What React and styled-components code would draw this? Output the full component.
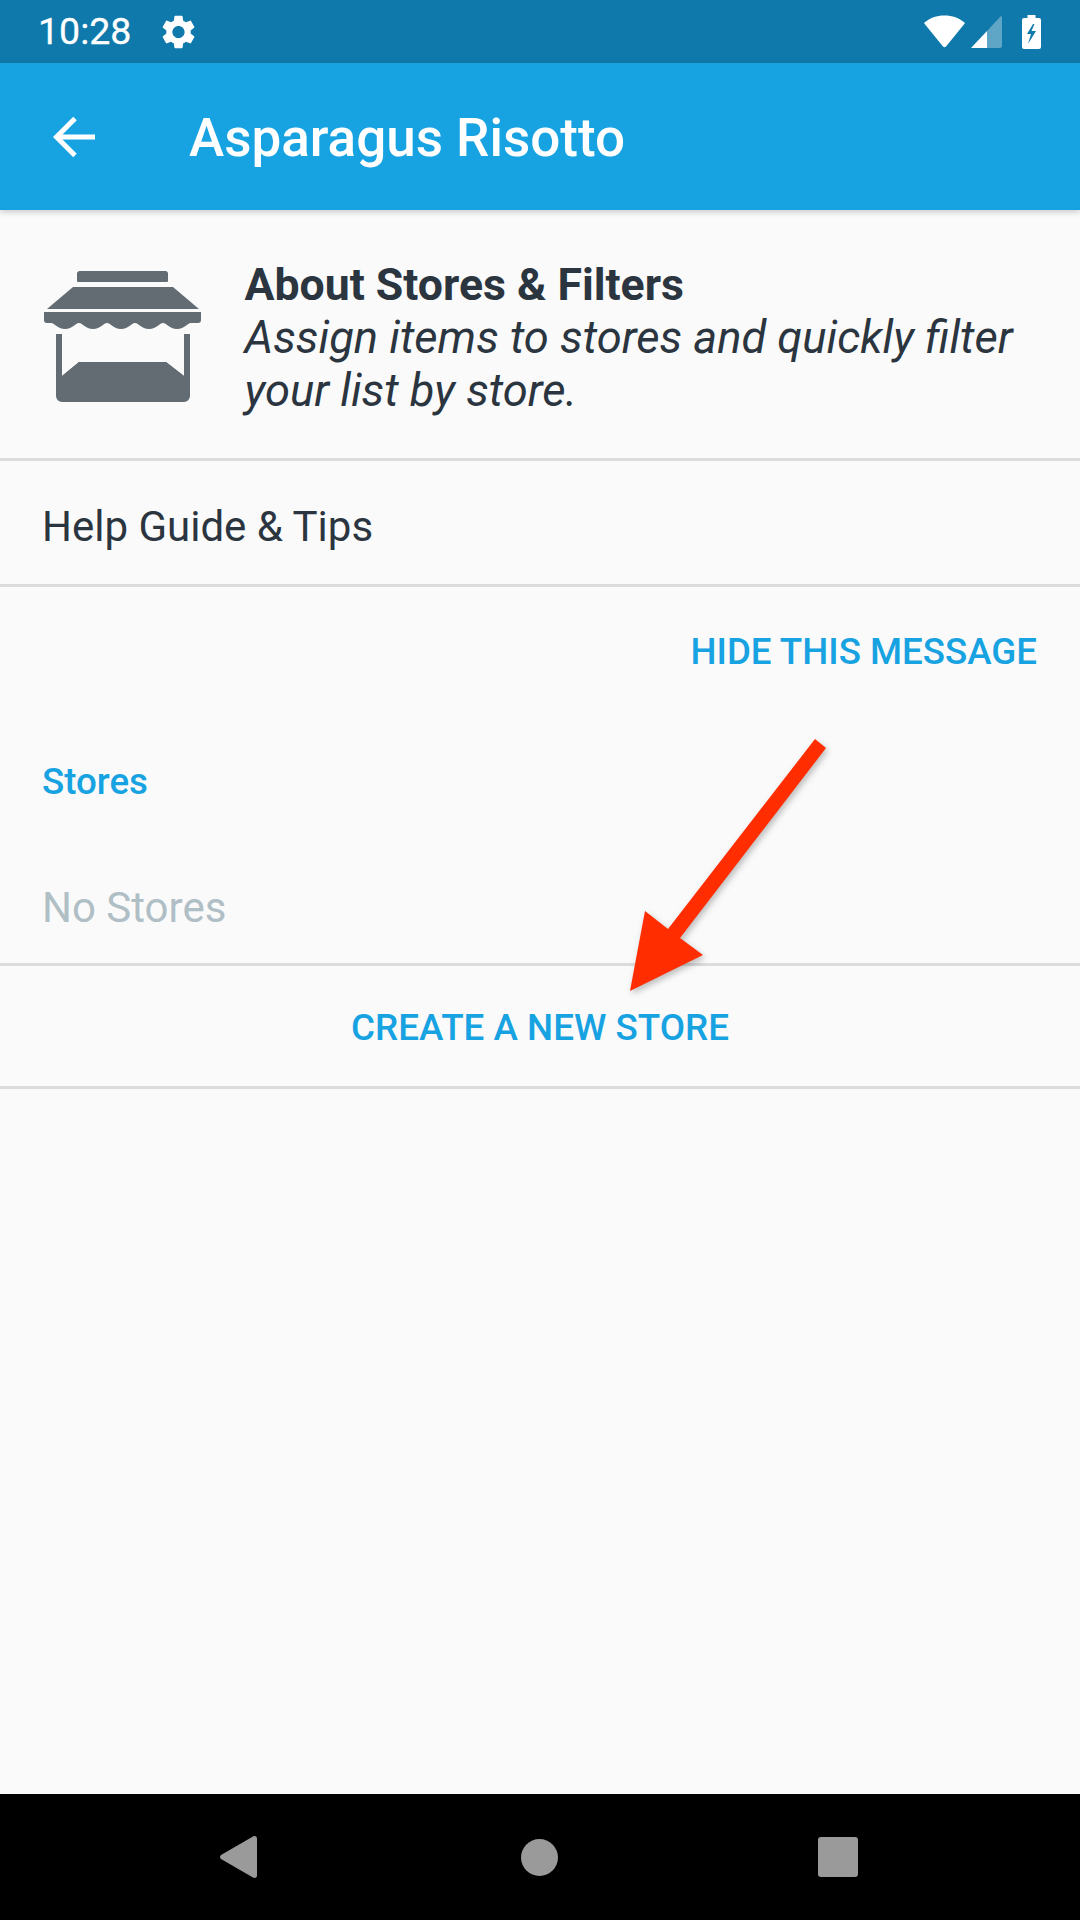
import React from "react";
import styled, { createGlobalStyle } from "styled-components";

const Global = createGlobalStyle`
  html, body { margin: 0; padding: 0; background: #fafafa; }
  * { box-sizing: border-box; }
`;
const Screen = styled.div`
  position: relative; width: 1080px; height: 1920px; display: flex; flex-direction: column;
  background: #fafafa; font-family: Roboto, sans-serif; overflow: hidden;
`;
const StatusBar = styled.div`
  height: 63px; flex: none; background: #1079ab; color: #fff; display: flex; align-items: center;
  padding: 0 39px 0 38px;
`;
const Time = styled.span`font-size: 37.5px; line-height: 65px; margin-right: 31px; -webkit-text-stroke: 0.3px #fff;`;
const Spacer = styled.div`flex: 1;`;
const StatusIcon = styled.svg`display: block; flex: none; margin-left: ${p => p.$gap || 0}px; fill: #fff;`;
const AppBar = styled.header`
  height: 147px; flex: none; background: #17a2e2; color: #fff; display: flex; align-items: center;
  padding-left: 53px; box-shadow: 0 2px 6px rgba(0,0,0,.2); position: relative; z-index: 1;
`;
const BackIcon = styled.svg`display: block; flex: none; margin-right: 94px;`;
const Title = styled.h1`margin: 2px 0 0; font-size: 53px; font-weight: 500; line-height: 60px;`;
const Main = styled.main`flex: 1; display: flex; flex-direction: column;`;
const About = styled.section`
  height: 251px; display: flex; align-items: flex-start; padding: 49px 0 0 44px;
  border-bottom: 3px solid #dcdcdc;
`;
const StoreIcon = styled.svg`display: block; flex: none; margin: 11px 44px 0 0;`;
const AboutCopy = styled.div`margin-left: -0.5px;`;
const AboutTitle = styled.div`font-size: 44.6px; font-weight: 700; line-height: 53px; color: #2b3540;`;
const AboutText = styled.div`font-size: 45.3px; font-style: italic; line-height: 52.5px; color: #2b3540;`;
const Row = styled.div`
  height: 126px; display: flex; align-items: center; padding: ${p => p.$center ? 2 : 7}px 42px 0;
  justify-content: ${p => p.$center ? "center" : "flex-start"};
  border-bottom: ${p => p.$divider ? "3px solid #dcdcdc" : "none"};
  font-size: 42px; color: #2b3540;
`;
const HideLink = styled.div`
  text-align: right; padding: 43px 43px 0; font-size: 36.7px; line-height: 44px; font-weight: 500; color: #17a2e2;
`;
const SectionLabel = styled.div`
  padding: 89px 42px 0; font-size: 36.7px; line-height: 38px; font-weight: 500; color: #17a2e2;
`;
const Empty = styled.div`
  height: 143px; padding: 0 42px 31px; display: flex; align-items: flex-end; margin-top: 22px;
  font-size: 42px; color: #b0bec5; border-bottom: 3px solid #dcdcdc;
`;
const CreateLink = styled(Row)`font-size: 36.8px; font-weight: 500; color: #17a2e2; height: 123px;`;
const NavBar = styled.nav`
  height: 126px; flex: none; background: #000; display: flex; align-items: center;
  padding: 0 222px 0 220px; justify-content: space-between;
`;
const NavIcon = styled.svg`display: block; fill: #9a9a9a; margin-left: ${p => p.$shift || 0}px;`;
const ArrowLayer = styled.svg`
  position: absolute; left: 620px; top: 730px; z-index: 2; overflow: visible;
  filter: drop-shadow(2px 3px 3px rgba(0,0,0,.25));
`;

export default function App() {
  return (
    <Screen>
      <Global />
      <StatusBar>
        <Time>10:28</Time>
        <StatusIcon width="33" height="34" viewBox="2.6 2 18.8 20">
          <path d="M19.14 12.94c.04-.3.06-.61.06-.94 0-.32-.02-.64-.07-.94l2.03-1.58c.18-.14.23-.41.12-.61l-1.92-3.32c-.12-.22-.37-.29-.59-.22l-2.39.96c-.5-.38-1.03-.7-1.62-.94l-.36-2.54c-.04-.24-.24-.41-.48-.41h-3.84c-.24 0-.43.17-.47.41l-.36 2.54c-.59.24-1.13.57-1.62.94l-2.39-.96c-.22-.08-.47 0-.59.22L2.74 8.87c-.12.21-.08.47.12.61l2.03 1.58c-.05.3-.09.63-.09.94s.02.64.07.94l-2.03 1.58c-.18.14-.23.41-.12.61l1.92 3.32c.12.22.37.29.59.22l2.39-.96c.5.38 1.03.7 1.62.94l.36 2.54c.05.24.24.41.48.41h3.84c.24 0 .44-.17.47-.41l.36-2.54c.59-.24 1.13-.56 1.62-.94l2.39.96c.22.08.47 0 .59-.22l1.92-3.32c.12-.22.07-.47-.12-.61l-2.01-1.58zM12 15.6c-1.98 0-3.6-1.62-3.6-3.6s1.62-3.6 3.6-3.6 3.6 1.62 3.6 3.6-1.62 3.6-3.6 3.6z" />
        </StatusIcon>
        <Spacer />
        <StatusIcon width="41" height="33" viewBox="0 0 41 33">
          <path d="M0.5 7.5C6 3 12.5 0.5 20.5 0.5S35 3 40.5 7.5c.4.4.4.9 0 1.3L22 31.5c-.8 1-2.2 1-3 0L.5 8.8c-.4-.4-.4-.9 0-1.3z" />
        </StatusIcon>
        <StatusIcon $gap={6} width="31" height="32" viewBox="0 0 31 32">
          <path d="M0 32 L16 15 V32 Z" />
          <path d="M16 15 L29.5 0.6 C30.2 0 31 .4 31 1.2 V30 a2 2 0 0 1-2 2 H16 Z" fillOpacity=".33" />
        </StatusIcon>
        <StatusIcon $gap={20} width="19" height="34" viewBox="0 0 19 34">
          <path fillRule="evenodd" d="M5.5 0h8v3H17a2 2 0 0 1 2 2v27a2 2 0 0 1-2 2H2a2 2 0 0 1-2-2V5a2 2 0 0 1 2-2h3.5zM11 9 5 19h4l-3 10 8-13h-4.5l3-7z" />
        </StatusIcon>
      </StatusBar>
      <AppBar>
        <BackIcon width="42" height="42" viewBox="0 0 42 42" fill="none" stroke="#fff" strokeWidth="5">
          <path d="M42 21H4M22 2.5 3.5 21 22 39.5" />
        </BackIcon>
        <Title>Asparagus Risotto</Title>
      </AppBar>
      <Main>
        <About>
          <StoreIcon width="157" height="132" viewBox="0 0 157 132" fill="#626c72">
            <path d="M36 1h86a3 3 0 0 1 2 2v8a1 1 0 0 1-1 1H34a1 1 0 0 1-1-1V3a3 3 0 0 1 3-2z" />
            <path d="M29 17h100l26 22H3z" />
            <path d="M0 42h157v8a3 3 0 0 1-3 3h-7c-4 0-6 6-14 6s-10-6-14-6-6 6-14 6-10-6-14-6-6 6-14 6-10-6-14-6-6 6-14 6-10-6-14-6-6 6-14 6-10-6-14-6H3a3 3 0 0 1-3-3z" />
            <path d="M12 64h6v42l17-14h87l18 14V64h6v62a6 6 0 0 1-6 6H18a6 6 0 0 1-6-6z" />
            <path d="M35 92h87l18 14v20H18v-20z" />
          </StoreIcon>
          <AboutCopy>
            <AboutTitle>About Stores &amp; Filters</AboutTitle>
            <AboutText>Assign items to stores and quickly filter<br />your list by store.</AboutText>
          </AboutCopy>
        </About>
        <Row $divider>Help Guide &amp; Tips</Row>
        <HideLink>HIDE THIS MESSAGE</HideLink>
        <SectionLabel>Stores</SectionLabel>
        <Empty>No Stores</Empty>
        <CreateLink as="div" $center $divider>CREATE A NEW STORE</CreateLink>
      </Main>
      <NavBar>
        <NavIcon width="37" height="42" viewBox="0 0 37 42">
          <path d="M1 19 33 .5c2-1 4 0 4 2v37c0 2-2 3-4 2L1 23c-1.300-1-1.300-3 0-4z" />
        </NavIcon>
        <NavIcon $shift={4} width="37" height="37" viewBox="0 0 37 37"><circle cx="18.500" cy="18.500" r="18.500" /></NavIcon>
        <NavIcon width="40" height="40" viewBox="0 0 40 40"><rect width="40" height="40" rx="3" /></NavIcon>
      </NavBar>
      <ArrowLayer width="206" height="261" viewBox="620 730 206 261" fill="#ff2d00">
        <path d="M815 739 826 748 680 938 703 955 630 991 645 911 668 929Z" />
      </ArrowLayer>
    </Screen>
  );
}
